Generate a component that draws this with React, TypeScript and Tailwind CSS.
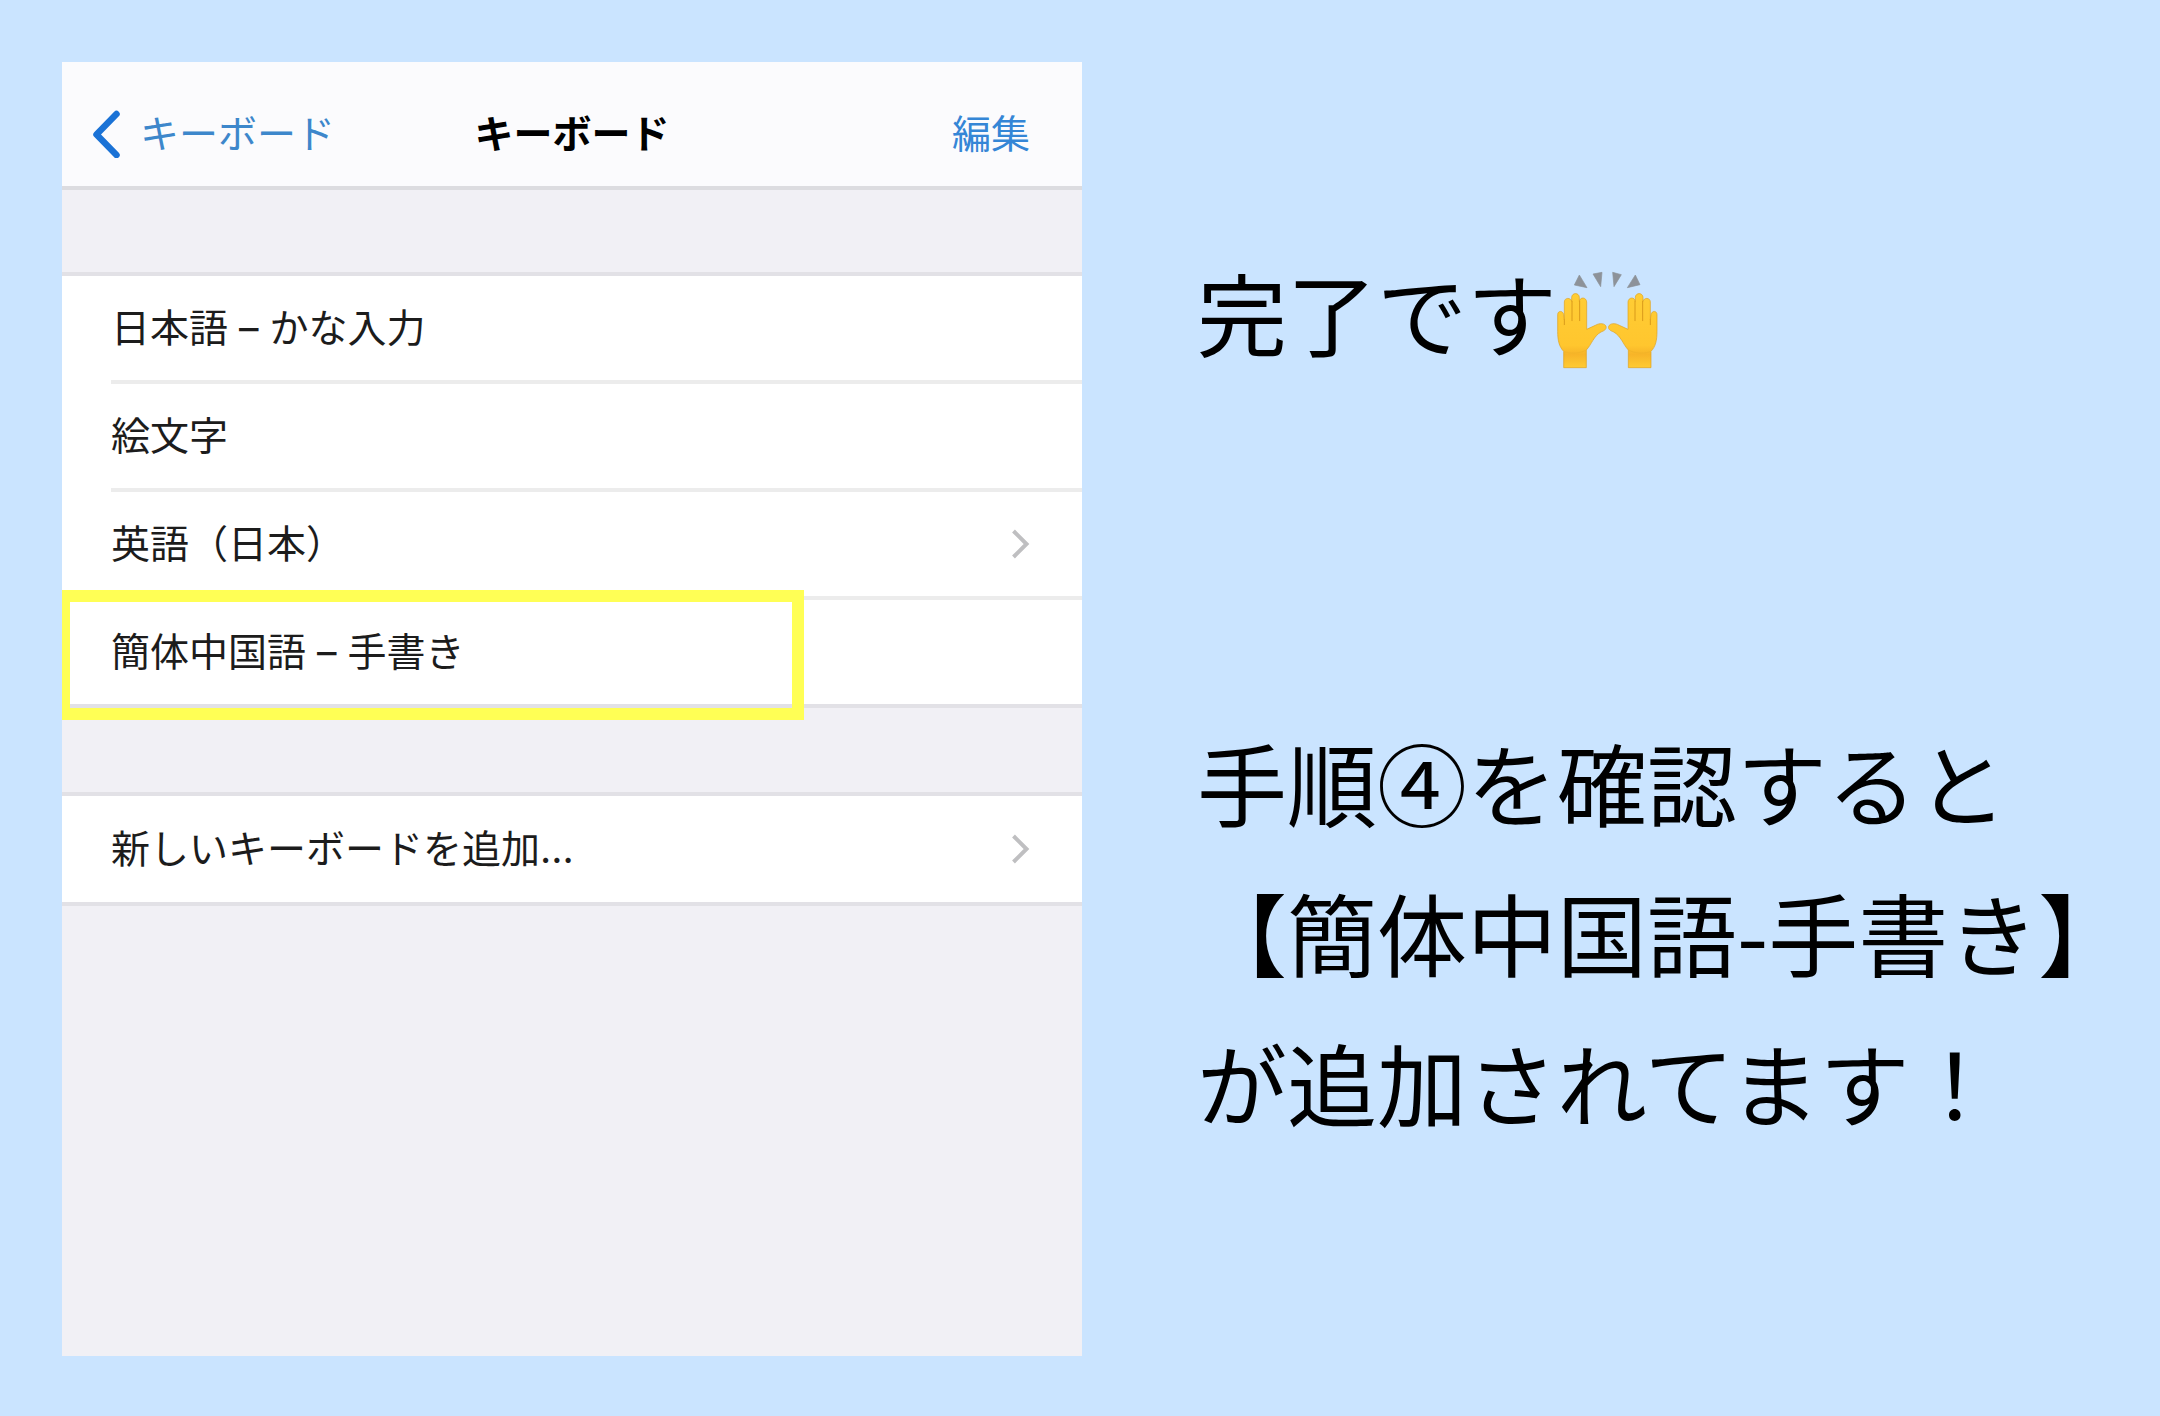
import React from 'react';

const keyboards = [
  { name: '日本語 – かな入力', hasDetail: false, highlighted: false },
  { name: '絵文字', hasDetail: false, highlighted: false },
  { name: '英語（日本）', hasDetail: true, highlighted: false },
  { name: '簡体中国語 – 手書き', hasDetail: false, highlighted: true },
];

const ChevronRight = () => (
  <svg className="w-5 h-8 shrink-0" viewBox="0 0 20 32" fill="none" aria-hidden="true">
    <path d="M3.5 3 L16.5 16 L3.5 29" stroke="#bfbfc1" strokeWidth="4" />
  </svg>
);

const ChevronLeft = () => (
  <svg className="w-7 h-12 shrink-0" viewBox="0 0 28 48" fill="none" aria-hidden="true">
    <path d="M24.5 4 L4.5 24.5 L24.5 45" stroke="#1a72d6" strokeWidth="6.5" strokeLinecap="round" strokeLinejoin="round" />
  </svg>
);

const Hand = () => (
  <>
    <path
      d="M70 355 V306 C56 292 52 272 52 246 V196 C52 183 68 183 70 196 L72 212 V158 C72 144 92 144 94 156 V144 C95 129 116 129 117 144 V156 C119 142 138 143 139 158 V240 L165 228 C178 220 194 222 197 231 C200 240 190 245 182 248 C160 260 154 285 138 302 V355 Z"
      fill="url(#skin)"
      stroke="#e0a01c"
      strokeWidth="2"
    />
    <path d="M72 212 V226 M95 156 V214 M118 156 V214" stroke="#d99a1b" strokeWidth="3" strokeLinecap="round" />
    <path d="M71 307 Q104 318 137 303" stroke="#f3b428" strokeWidth="3" fill="none" />
  </>
);

const RaisedHands = () => (
  <svg className="w-[101px] h-[98px] mt-[18px] shrink-0" viewBox="50 65 303 294" role="img" aria-label="🙌">
    <defs>
      <linearGradient id="skin" x1="0" y1="0" x2="0" y2="1">
        <stop offset="0" stopColor="#ffcd35" />
        <stop offset="0.7" stopColor="#ffc62e" />
        <stop offset="0.82" stopColor="#f7b428" />
        <stop offset="1" stopColor="#ffcb33" />
      </linearGradient>
    </defs>
    <path
      d="M117 77 L140 115 L102 107 Z M158 74 L185 69 L181 112 Z M217 69 L243 76 L221 112 Z M285 77 L299 106 L261 115 Z"
      fill="#8d9299"
      stroke="#8d9299"
      strokeWidth="2"
    />
    <Hand />
    <g transform="translate(402 0) scale(-1 1)">
      <Hand />
    </g>
  </svg>
);

const App = () => {
  return (
    <main className="min-h-screen grid grid-cols-[102fr_105fr] bg-[#cae4ff] pt-[62px] pb-[60px] pl-[62px] pr-7 font-['Inter','Noto_Sans_CJK_JP',sans-serif]">
      {/* Settings panel */}
      <section className="bg-[#f1f0f5] text-[39px] leading-[52px] text-[#1c1c1c]">
        <header className="h-32 grid grid-cols-[1fr_auto_1fr] items-center pt-5 px-[30px] bg-[#fbfbfd] border-b-4 border-[#dcdce0]">
          <a href="#back" className="flex items-center gap-5 text-[#3d87cb]">
            <ChevronLeft />
            キーボード
          </a>
          <h1 className="font-bold text-black">キーボード</h1>
          <button type="button" className="justify-self-end pr-[22px] text-[#3586d6]">編集</button>
        </header>

        {/* Installed keyboards */}
        <ul className="mt-[82px] bg-white border-t-4 border-[#e2e1e6]">
          {keyboards.map((keyboard, index) => (
            <li
              key={keyboard.name}
              className={index === keyboards.length - 1 ? 'relative border-b-4 border-[#e2e1e6]' : 'relative'}
            >
              <div
                className={
                  index === keyboards.length - 1
                    ? 'ml-[49px] h-26 pr-[52px] flex items-center justify-between'
                    : 'ml-[49px] h-27 pr-[52px] flex items-center justify-between border-b-4 border-[#ececec]'
                }
              >
                <span>{keyboard.name}</span>
                {keyboard.hasDetail && <ChevronRight />}
              </div>
              {keyboard.highlighted && (
                <div className="absolute left-0 -top-2.5 -bottom-4 w-8/11 border-12 border-l-8 border-[#ffff55]" />
              )}
            </li>
          ))}
        </ul>

        {/* Add keyboard */}
        <a
          href="#add"
          className="mt-[84px] h-[114px] pl-[49px] pr-[52px] flex items-center justify-between bg-white border-y-4 border-[#e2e1e6]"
        >
          <span>新しいキーボードを追加...</span>
          <ChevronRight />
        </a>
      </section>

      {/* Explanation */}
      <section className="pt-[174px] pl-[115px] flex flex-col gap-80 text-[90px] leading-[150px] text-black font-['Noto_Sans_CJK_JP',sans-serif]">
        <p className="flex items-center">
          完了です
          <RaisedHands />
        </p>
        <p>
          手順④を確認すると
          <br />
          【簡体中国語-手書き】
          <br />
          が追加されてます！
        </p>
      </section>
    </main>
  );
};

export default App;
